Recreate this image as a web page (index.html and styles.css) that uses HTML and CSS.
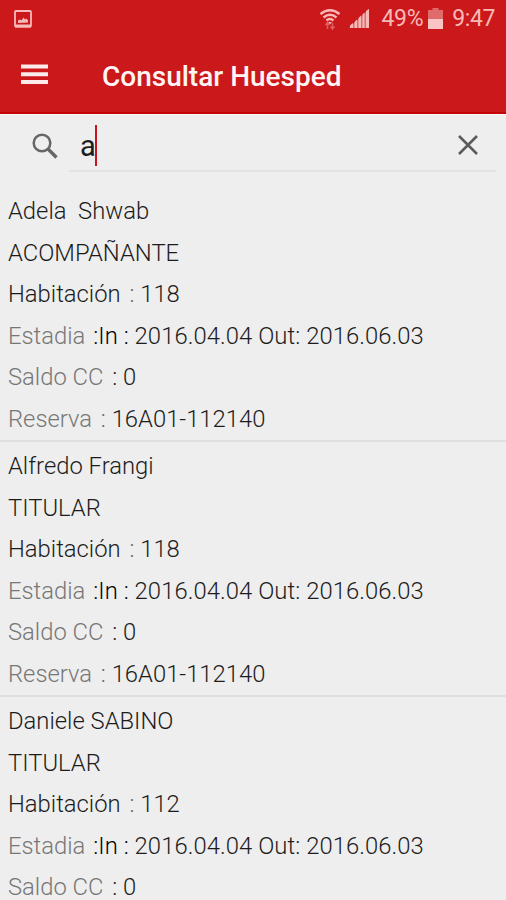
FILE: index.html
```html
<!DOCTYPE html>
<html lang="es">
<head>
    <meta charset="UTF-8">
    <meta name="viewport" content="width=device-width, initial-scale=1.0">
    <title>Consultar Huesped</title>
    <link rel="stylesheet" href="styles.css">
</head>
<body>
    <header class="header">
        <div class="status-bar">
            <svg class="icon-picture" width="18" height="18" viewBox="0 0 18 18">
                <rect x="1" y="1" width="16" height="15.5" rx="1" fill="none" stroke="#f8b9b9" stroke-width="1.800"/>
                <path d="M1 14.500h16v3H1zM4 13V10.500l2-1 1.500 1 2-3 1.500 2 1.500-1 1.500 2v2z" fill="#f8b9b9"/>
            </svg>
            <svg class="icon-wifi" width="22" height="22" viewBox="0 0 22 22">
                <g fill="none" stroke="#f8b9b9" stroke-width="2.400">
                    <path d="M1.500 6Q11-1.500 20.500 6"/>
                    <path d="M4.500 9.500Q11 4 17.500 9.500"/>
                    <path d="M7.500 12.500Q11 9.500 14.500 12.500"/>
                </g>
                <path d="M9 14h4l-2 2.500z" fill="#f8b9b9"/>
                <path d="M8.500 21v-6M6.500 17l2-2.500 2 2.500M13.500 15v6M11.500 18.500l2 2.500 2-2.500" fill="none" stroke="#dc6060" stroke-width="1.500"/>
            </svg>
            <svg class="icon-signal" width="20" height="19" viewBox="0 0 20 19">
                <path d="M0 19L20 0V19z" fill="#e06b6b"/>
                <path d="M1 19v-2.500l3-2.500v5zM5.500 19v-6l2.500-2.500V19zM9.500 19V9l2.500-2.500V19zM13.500 19V5.500l2-2V19zM17 19V2l3-2v19z" fill="#f8b9b9"/>
            </svg>
            <span class="battery-text">49%</span>
            <svg class="icon-battery" width="15" height="21" viewBox="0 0 15 21">
                <path d="M4.500 0h6v2H15v9H0V2h4.500z" fill="#e06b6b"/>
                <path d="M0 11h15v10H0z" fill="#fbc4c4"/>
            </svg>
            <span class="clock">9:47</span>
        </div>
        <div class="toolbar">
            <svg class="icon-menu" width="27" height="21" viewBox="0 0 27 21">
                <path d="M0 .5h27v4H0zM0 8.300h27v4H0zM0 16.100h27v4H0z" fill="#fdeaea"/>
            </svg>
            <h1 class="title">Consultar Huesped</h1>
        </div>
    </header>

    <div class="search">
        <svg class="icon-search" width="26" height="26" viewBox="0 0 26 26" fill="none" stroke="#666">
            <circle cx="10" cy="10" r="8.300" stroke-width="2.500"/>
            <path d="M16 16l8.500 8.500" stroke-width="3.300"/>
        </svg>
        <div class="search-field">
            <span class="query">a</span>
            <span class="caret"></span>
            <svg class="icon-close" width="20" height="20" viewBox="0 0 20 20">
                <path d="M1 1l18 18M19 1L1 19" fill="none" stroke="#5a5a5a" stroke-width="2.500"/>
            </svg>
        </div>
    </div>

    <ul class="guests">
        <li class="guest">
            <p class="name">Adela&nbsp; Shwab</p>
            <p class="type">ACOMPAÑANTE</p>
            <p class="room">Habitación <span class="value"><i>:</i> 118</span></p>
            <p class="stay"><span class="label">Estadia</span> <span class="value"><b>:In :</b> 2016.04.04 Out: 2016.06.03</span></p>
            <p class="balance"><span class="label">Saldo CC</span> <span class="value">: 0</span></p>
            <p class="booking"><span class="label">Reserva</span> <span class="value"><i>:</i> 16A01-112140</span></p>
        </li>
        <li class="guest">
            <p class="name">Alfredo Frangi</p>
            <p class="type">TITULAR</p>
            <p class="room">Habitación <span class="value"><i>:</i> 118</span></p>
            <p class="stay"><span class="label">Estadia</span> <span class="value"><b>:In :</b> 2016.04.04 Out: 2016.06.03</span></p>
            <p class="balance"><span class="label">Saldo CC</span> <span class="value">: 0</span></p>
            <p class="booking"><span class="label">Reserva</span> <span class="value"><i>:</i> 16A01-112140</span></p>
        </li>
        <li class="guest">
            <p class="name">Daniele SABINO</p>
            <p class="type">TITULAR</p>
            <p class="room">Habitación <span class="value"><i>:</i> 112</span></p>
            <p class="stay"><span class="label">Estadia</span> <span class="value"><b>:In :</b> 2016.04.04 Out: 2016.06.03</span></p>
            <p class="balance"><span class="label">Saldo CC</span> <span class="value">: 0</span></p>
        </li>
    </ul>
</body>
</html>
```

FILE: styles.css
```css
* {
    box-sizing: border-box;
}
body {
    margin: 0;
    height: 900px;
    overflow: hidden;
    background-color: #eeeeee;
    color: #1c1c1c;
    font-family: Roboto, sans-serif;
}
.header {
    height: 114px;
    background-color: #cb181b;
    border-bottom: 2px solid #c40408;
}
.status-bar {
    display: flex;
    align-items: center;
    height: 37px;
    padding: 0 11px 0 14px;
    color: #f8b9b9;
    font-size: 23px;
}
.icon-picture {
    margin-right: auto;
}
.icon-signal {
    margin: 0 12px 0 8px;
}
.icon-battery {
    margin: 0 9px 0 5px;
}
.battery-text {
    letter-spacing: -0.3px;
}
.clock {
    letter-spacing: -0.4px;
}
.toolbar {
    display: flex;
    align-items: center;
    height: 75px;
    padding-left: 21px;
}
.title {
    margin: 4px 0 0 54px;
    color: #fff5f5;
    font-size: 28px;
    font-weight: 500;
}
.search {
    display: flex;
    align-items: center;
    height: 58px;
    padding: 0 10px 0 32px;
    border-top: 1px solid #fbfbfb;
}
.icon-search {
    margin-top: 5px;
}
.search-field {
    display: flex;
    align-items: center;
    flex: 1;
    height: 57px;
    margin-left: 11px;
    padding: 5px 18px 0 11px;
    border-bottom: 2px solid #e2e2e2;
}
.query {
    margin-top: 2px;
    font-size: 29px;
}
.caret {
    width: 2px;
    height: 41px;
    margin-left: -1px;
    background-color: #c8141c;
}
.icon-close {
    margin-left: auto;
}
.guests {
    margin: 15px 0 0;
    padding: 0;
    list-style: none;
}
.guest {
    height: 255.200px;
    padding: 4px 8px 0;
    border-bottom: 2px solid #dfdfdf;
    font-size: 23.800px;
    font-weight: 300;
}
.guest:last-child {
    height: auto;
    border-bottom: none;
}
.guest p {
    margin: 0;
    height: 41.500px;
    line-height: 41.500px;
    white-space: nowrap;
}
.guest i {
    color: #666;
    font-style: normal;
}
.guest b {
    color: #000;
    font-weight: 300;
}
.value {
    margin-left: 3px;
}
.stay .value {
    margin-left: 2px;
    letter-spacing: 0.070px;
}
.label {
    color: #777;
}
```
